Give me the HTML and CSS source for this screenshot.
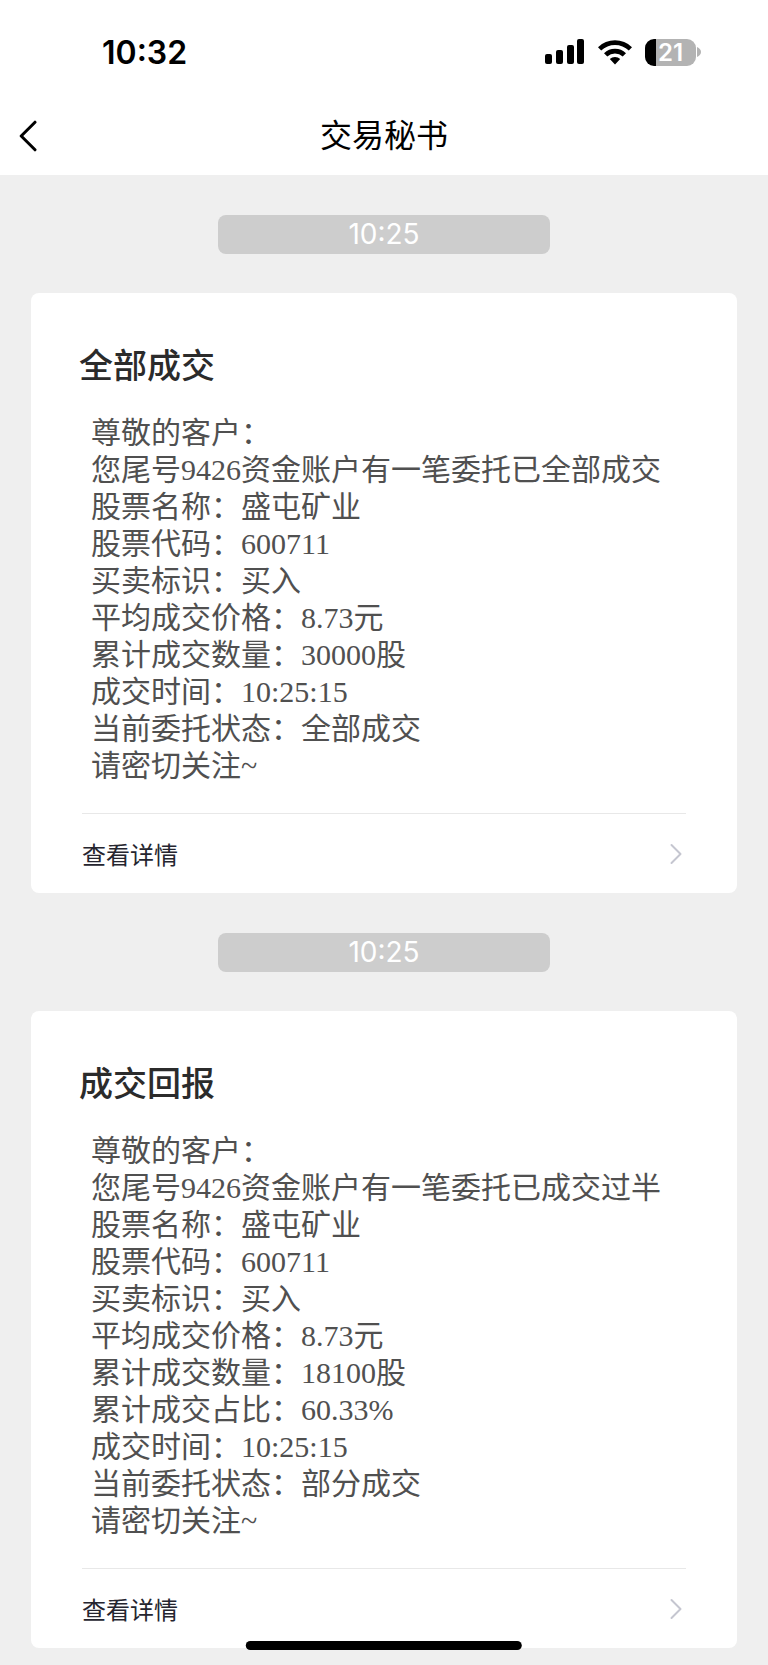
FILE: index.html
```html
<!DOCTYPE html>
<html lang="zh-CN">
  <head>
    <meta charset="UTF-8" />
    <meta name="viewport" content="width=device-width, initial-scale=1.0" />
    <title>交易秘书</title>
    <link rel="stylesheet" href="styles.css">
  </head>
  <body>
    <div class="status-bar">
      <span class="status-time">10:32</span>
      <div class="status-icons">
        <svg class="signal" width="40" height="26" viewBox="0 0 40 26">
          <rect x="0" y="15" width="7" height="10" rx="2" />
          <rect x="11" y="11" width="7" height="14" rx="2" />
          <rect x="22" y="6" width="7" height="19" rx="2" />
          <rect x="32" y="0" width="7" height="25" rx="2" />
        </svg>
        <svg class="wifi" width="34" height="26" viewBox="0 0 34 26">
          <path d="M0 8.2 A24.5 24.5 0 0 1 34 8.2 L30.8 11.6 A19.6 19.6 0 0 0 3.2 11.6 Z" />
          <path d="M6 14.2 A16 16 0 0 1 28 14.2 L24.7 17.5 A11.2 11.2 0 0 0 9.3 17.5 Z" />
          <path d="M11.8 20 A7.6 7.6 0 0 1 22.2 20 L17 25.4 Z" />
        </svg>
        <div class="battery">
          <span class="battery-level">21</span>
          <svg width="4" height="10" viewBox="0 0 4 10">
            <path d="M0 0 Q4 2 4 5 Q4 8 0 10 Z" />
          </svg>
        </div>
      </div>
    </div>

    <header class="nav-bar">
      <button class="back-button" type="button" aria-label="返回">
        <svg width="18" height="32" viewBox="0 0 18 32">
          <path d="M16 2.2 L2.2 16 L16 29.8" />
        </svg>
      </button>
      <h1>交易秘书</h1>
    </header>

    <main class="messages">
      <time class="time-pill">10:25</time>
      <article class="card">
        <h2>全部成交</h2>
        <p class="card-text">
          尊敬的客户：<br />
          您尾号9426资金账户有一笔委托已全部成交<br />
          股票名称：盛屯矿业<br />
          股票代码：600711<br />
          买卖标识：买入<br />
          平均成交价格：8.73元<br />
          累计成交数量：30000股<br />
          成交时间：10:25:15<br />
          当前委托状态：全部成交<br />
          请密切关注~
        </p>
        <a class="card-link" href="#">
          查看详情
          <svg width="12" height="22" viewBox="0 0 12 22">
            <path d="M1.5 2 L10.5 11 L1.5 20" />
          </svg>
        </a>
      </article>

      <time class="time-pill">10:25</time>
      <article class="card">
        <h2>成交回报</h2>
        <p class="card-text">
          尊敬的客户：<br />
          您尾号9426资金账户有一笔委托已成交过半<br />
          股票名称：盛屯矿业<br />
          股票代码：600711<br />
          买卖标识：买入<br />
          平均成交价格：8.73元<br />
          累计成交数量：18100股<br />
          累计成交占比：60.33%<br />
          成交时间：10:25:15<br />
          当前委托状态：部分成交<br />
          请密切关注~
        </p>
        <a class="card-link" href="#">
          查看详情
          <svg width="12" height="22" viewBox="0 0 12 22">
            <path d="M1.5 2 L10.5 11 L1.5 20" />
          </svg>
        </a>
      </article>
    </main>

    <div class="home-indicator"></div>
  </body>
</html>
```

FILE: styles.css
```css
* {
  box-sizing: border-box;
}

body {
  margin: 0;
  background-color: #efefef;
  font-family: "Inter", "Noto Sans CJK SC", sans-serif;
}

.status-bar {
  display: flex;
  justify-content: space-between;
  align-items: center;
  height: 95px;
  padding: 9px 67px 0 102px;
  background-color: #fff;
}

.status-time {
  font-size: 32px;
  font-weight: 600;
}

.status-icons {
  display: flex;
  align-items: center;
  gap: 13px;
}

.battery {
  display: flex;
  align-items: center;
  gap: 1px;
}

.battery-level {
  width: 51px;
  height: 27px;
  border-radius: 9px;
  /* black part is the charge left */
  background: linear-gradient(to right, #000 21%, #b3b3b3 21%);
  color: #fff;
  font-size: 24px;
  font-weight: 600;
  line-height: 27px;
  text-align: center;
}

.battery svg {
  fill: #b3b3b3;
}

.nav-bar {
  display: grid;
  grid-template-columns: 60px 1fr 60px;
  align-items: center;
  height: 80px;
  padding-top: 2px;
  background-color: #fff;
}

.nav-bar h1 {
  margin: 0;
  font-size: 32px;
  font-weight: 400;
  line-height: 48px;
  text-align: center;
}

.back-button {
  display: flex;
  padding: 0 0 0 19px;
  border: none;
  background: none;
}

.back-button path {
  fill: none;
  stroke: #000;
  stroke-width: 3;
  stroke-linecap: round;
  stroke-linejoin: round;
}

.messages {
  padding: 40px 31px 16px;
}

.time-pill {
  display: block;
  width: 47%;
  margin: 0 auto 39px;
  border-radius: 8px;
  background-color: #cdcdcd;
  color: #fff;
  font-size: 28px;
  line-height: 39px;
  text-align: center;
}

.card {
  margin-bottom: 40px;
  padding: 49px 51px 0;
  border-radius: 8px;
  background-color: #fff;
}

.card:last-child {
  margin-bottom: 0;
}

.card h2 {
  margin: 0 0 24px -3px;
  color: #2b2b2b;
  font-size: 34px;
  font-weight: 500;
  line-height: 48px;
}

.card-text {
  margin: 0 0 29px;
  padding-left: 9px;
  color: #505050;
  font-family: "Liberation Serif", "Noto Sans CJK SC", serif;
  font-size: 30px;
  line-height: 37px;
}

.card-link {
  display: flex;
  justify-content: space-between;
  align-items: center;
  height: 80px;
  padding-right: 4px;
  border-top: 1px solid #e8e8e8;
  color: #25252f;
  font-size: 24px;
  text-decoration: none;
}

.card-link path {
  fill: none;
  stroke: #c5c6d0;
  stroke-width: 2;
  stroke-linecap: round;
  stroke-linejoin: round;
}

.home-indicator {
  position: fixed;
  bottom: 15px;
  left: 50%;
  width: 36%;
  height: 9px;
  border-radius: 5px;
  background-color: #000;
  transform: translateX(-50%);
}
```
